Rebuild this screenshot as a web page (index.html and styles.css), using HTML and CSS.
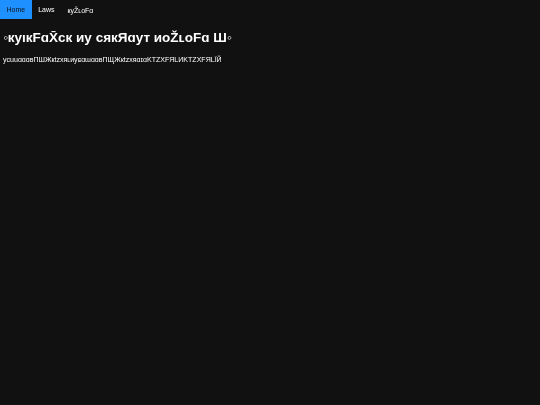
FILE: index.html
```html
<!DOCTYPE html>
<html lang="ru">
<head>
  <meta charset="UTF-8" />
  <title>Home</title>
  <link rel="stylesheet" href="styles.css">
</head>
<body>
  <nav class="topnav">
    <a class="active" href="#"><span>Home</span></a>
    <a href="#"><span>Laws</span></a>
    <a class="odd" href="#"><span>кyŽʟoFɑ</span></a>
  </nav>
  <main class="content">
    <h1>◦кyıкFɑX̄ск иу сякЯɑут иоŽʟоFɑ Ш◦</h1>
    <p>ycuuɑɑɑвПШЖкtzxяʟиуɕɑɯɑɑвПЩЖкtzxяɑɪɑKTZXFЯLИKTZXFЯLЇЙ</p>
  </main>
</body>
</html>
```

FILE: styles.css
```css
* {
  box-sizing: border-box;
}

body {
  margin: 0;
  background-color: #111111;
  color: #ffffff;
  font-family: "Liberation Sans", Arial, sans-serif;
}

.topnav {
  display: flex;
  height: 19px;
  font-size: 7px;
}

.topnav a {
  display: block;
  padding: 6px 6.5px 0;
  color: #ffffff;
  text-decoration: none;
}

.topnav a span {
  display: block;
  filter: blur(0.25px);
}

.topnav a.active {
  background-color: #1e90ff;
  color: #111111;
}

.topnav a.odd {
  padding-top: 7px;
}

.content {
  padding: 0 3px;
  filter: blur(0.25px);
}

h1 {
  margin: 11px 0 0;
  font-size: 13.5px;
  line-height: 16px;
  font-weight: bold;
}

p {
  margin: 9px 0 0;
  font-size: 7.05px;
  line-height: 9px;
}
```
